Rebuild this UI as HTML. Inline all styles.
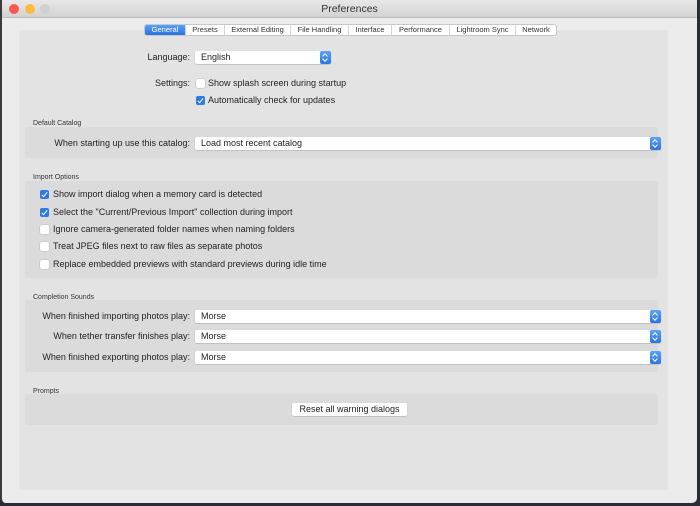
<!DOCTYPE html>
<html><head><style>
*{box-sizing:border-box;margin:0;padding:0}
body{width:700px;height:506px;background:#2a2d35;font-family:"Liberation Sans",sans-serif;font-size:9px;color:#222;position:relative;overflow:hidden}
.win{position:absolute;left:0;top:0;width:697px;height:503px;background:#ececec;border-radius:0 0 5px 5px;border-left:2px solid #3a3a3a}
.title{position:absolute;left:0;top:0;width:100%;height:18px;background:linear-gradient(#e8e8e8,#d3d3d3);border-bottom:1px solid #bdbdbd;text-align:center;font-size:10.5px;line-height:18px;color:#333}
.dot{position:absolute;top:4px;width:10px;height:10px;border-radius:50%}
.panel{position:absolute;left:17px;top:30px;width:649px;height:460px;background:#e3e3e3;border-radius:3px}
.tabs{position:absolute;top:24px;left:144px;height:12px;display:flex;background:#fff;border:1px solid #c8c8c8;border-radius:3px;font-size:7.5px;line-height:10px}
.tabs div{border-right:1px solid #d4d4d4;text-align:center;color:#333;white-space:nowrap;overflow:hidden}
.tabs .on{background:linear-gradient(#5aa0f6,#2a72e0);color:#fff;border-radius:2px 0 0 2px}
.box{position:absolute;left:25px;width:633px;background:#dbdbdb;border-radius:3px}
.lbl{position:absolute;font-size:7px;color:#333;left:33px}
.pop{position:absolute;background:#fff;height:13px;border-radius:2px;box-shadow:0 0.5px 1px #aaa;font-size:9px;line-height:13px;padding-left:6px}
.pop i{position:absolute;right:0;top:0;width:11px;height:13px;background:linear-gradient(#5aa2f8,#2c74e2);border-radius:2px}
.pop i:before{content:"";position:absolute;left:3px;top:3px;width:3px;height:3px;border-left:1px solid #fff;border-top:1px solid #fff;transform:rotate(45deg)}
.pop i:after{content:"";position:absolute;left:3px;top:6px;width:3px;height:3px;border-right:1px solid #fff;border-bottom:1px solid #fff;transform:rotate(45deg)}
.t{position:absolute;font-size:9px;white-space:nowrap}
.r{text-align:right}
.cb{position:absolute;width:9px;height:9px;background:#fff;border-radius:2px;box-shadow:0 0 0 0.5px #bbb}
.cb.on{background:#2f7be6;box-shadow:none}
.cb.on:after{content:"";position:absolute;left:3px;top:1px;width:2px;height:5px;border-right:1.5px solid #fff;border-bottom:1.5px solid #fff;transform:rotate(40deg)}
</style></head><body>
<div class="win">
<div class="title">Preferences
<div class="dot" style="left:7px;background:#fc5753"></div>
<div class="dot" style="left:23px;background:#fdbc40"></div>
<div class="dot" style="left:38px;background:#d0d0d0"></div></div>
<div class="panel"></div>
</div>
<div class="tabs">
<div class="on" style="width:41px">General</div><div style="width:39px">Presets</div><div style="width:66px">External Editing</div><div style="width:58px">File Handling</div><div style="width:43px">Interface</div><div style="width:58px">Performance</div><div style="width:66px">Lightroom Sync</div><div style="width:40px;border:none">Network</div>
</div>

<div class="t r" style="right:510px;top:52px">Language:</div>
<div class="pop" style="left:195px;top:51px;width:136px">English<i></i></div>
<div class="t r" style="right:510px;top:78px">Settings:</div>
<div class="cb" style="left:196px;top:79px"></div><div class="t" style="left:208px;top:78px">Show splash screen during startup</div>
<div class="cb on" style="left:196px;top:96px"></div><div class="t" style="left:208px;top:95px">Automatically check for updates</div>

<div class="lbl" style="top:120px">Default Catalog</div>
<div class="box" style="top:127px;height:31px"></div>
<div class="t r" style="right:510px;top:138px">When starting up use this catalog:</div>
<div class="pop" style="left:195px;top:137px;width:466px">Load most recent catalog<i></i></div>

<div class="lbl" style="top:174px">Import Options</div>
<div class="box" style="top:181px;height:97px"></div>
<div class="cb on" style="left:40px;top:190px"></div><div class="t" style="left:53px;top:189px">Show import dialog when a memory card is detected</div>
<div class="cb on" style="left:40px;top:208px"></div><div class="t" style="left:53px;top:207px">Select the "Current/Previous Import" collection during import</div>
<div class="cb" style="left:40px;top:225px"></div><div class="t" style="left:53px;top:224px">Ignore camera-generated folder names when naming folders</div>
<div class="cb" style="left:40px;top:242px"></div><div class="t" style="left:53px;top:241px">Treat JPEG files next to raw files as separate photos</div>
<div class="cb" style="left:40px;top:260px"></div><div class="t" style="left:53px;top:259px">Replace embedded previews with standard previews during idle time</div>

<div class="lbl" style="top:294px">Completion Sounds</div>
<div class="box" style="top:300px;height:72px"></div>
<div class="t r" style="right:510px;top:311px">When finished importing photos play:</div>
<div class="pop" style="left:195px;top:310px;width:466px">Morse<i></i></div>
<div class="t r" style="right:510px;top:331px">When tether transfer finishes play:</div>
<div class="pop" style="left:195px;top:330px;width:466px">Morse<i></i></div>
<div class="t r" style="right:510px;top:352px">When finished exporting photos play:</div>
<div class="pop" style="left:195px;top:351px;width:466px">Morse<i></i></div>

<div class="lbl" style="top:388px">Prompts</div>
<div class="box" style="top:394px;height:31px"></div>
<div class="pop" style="left:292px;top:403px;width:115px;text-align:center;padding:0">Reset all warning dialogs</div>
</body></html>
